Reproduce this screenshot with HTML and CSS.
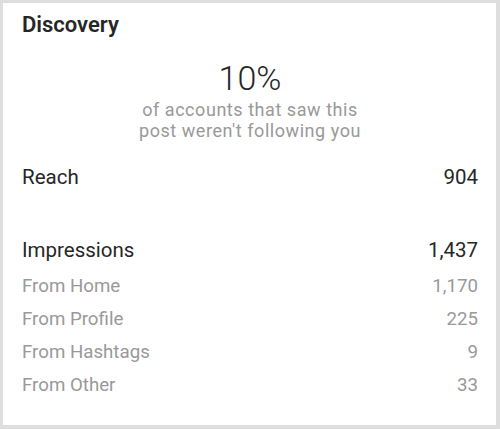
FILE: index.html
```html
<!DOCTYPE html>
<html>
<head>
<meta charset="utf-8">
<link rel="stylesheet" href="styles.css">
</head>
<body>
<div class="card">
  <h2 class="title">Discovery</h2>
  <div class="summary">
    <div class="percent">10%</div>
    <p class="caption">of accounts that saw this</p>
    <p class="caption">post weren't following you</p>
  </div>
  <div class="row main reach"><span>Reach</span><span>904</span></div>
  <div class="row main impressions"><span>Impressions</span><span>1,437</span></div>
  <div class="subs">
    <div class="row sub"><span>From Home</span><span>1,170</span></div>
    <div class="row sub"><span>From Profile</span><span>225</span></div>
    <div class="row sub"><span>From Hashtags</span><span>9</span></div>
    <div class="row sub"><span>From Other</span><span>33</span></div>
  </div>
</div>
</body>
</html>
```

FILE: styles.css
```css
html, body {
  margin: 0;
  padding: 0;
  height: 100%;
}
body {
  background: #dedede;
  padding: 3px 4px 4px 3px;
  box-sizing: border-box;
  font-family: Roboto, "Liberation Sans", sans-serif;
  color: #262626;
}
.card {
  background: #fff;
  height: 100%;
  box-sizing: border-box;
  padding: 9.5px 18px 0 19px;
}
.title {
  margin: 0;
  font-size: 22px;
  line-height: 24px;
  font-weight: 600;
}
.summary {
  margin-top: 21px;
  text-align: center;
}
.percent {
  font-size: 34px;
  line-height: 40px;
  font-weight: 300;
  margin-bottom: 1px;
}
.caption {
  margin: 0;
  font-size: 18px;
  line-height: 21.2px;
  letter-spacing: 0.55px;
  color: #999;
}
.row {
  display: flex;
  justify-content: space-between;
}
.main {
  font-size: 20.5px;
  line-height: 24px;
}
.reach {
  margin-top: 23.6px;
}
.impressions {
  margin-top: 49px;
}
.subs {
  margin-top: 8px;
}
.sub {
  font-size: 18.7px;
  line-height: 33px;
  color: #999;
}
```
